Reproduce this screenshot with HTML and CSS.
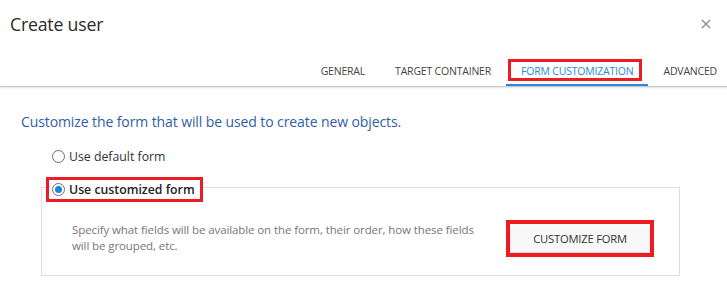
FILE: index.html
```html
<!DOCTYPE html>
<html lang="en">
<head>
    <meta charset="UTF-8">
    <meta name="viewport" content="width=device-width, initial-scale=1.0">
    <title>Create user</title>
    <link rel="stylesheet" href="styles.css">
</head>
<body>
    <div class="dialog">
        <div class="header">
            <h1>Create user</h1>
            <button class="close" type="button" aria-label="Close">
                <svg width="10" height="10" viewBox="0 0 10 10">
                    <path d="M1 1 L9 9 M9 1 L1 9" stroke="#8a8a8a" stroke-width="1.4" fill="none"/>
                </svg>
            </button>
        </div>
        <nav class="tabs">
            <a class="tab">GENERAL</a>
            <a class="tab">TARGET CONTAINER</a>
            <a class="tab active"><span class="mark">FORM CUSTOMIZATION</span></a>
            <a class="tab">ADVANCED</a>
        </nav>
        <div class="content">
            <p class="intro">Customize the form that will be used to create new objects.</p>
            <label class="option">
                <input type="radio" name="formType">
                <span>Use default form</span>
            </label>
            <fieldset class="panel">
                <legend>
                    <label class="option selected">
                        <input type="radio" name="formType" checked>
                        <span>Use customized form</span>
                    </label>
                </legend>
                <div class="panel-body">
                    <p class="desc">Specify what fields will be available on the form, their order, how these fields will be grouped, etc.</p>
                    <button class="btn" type="button">CUSTOMIZE FORM</button>
                </div>
            </fieldset>
        </div>
    </div>
</body>
</html>
```

FILE: styles.css
```css
body {
    margin: 0;
    background: #ffffff;
    font-family: 'Open Sans', 'Noto Sans', sans-serif;
    color: #333333;
    overflow: hidden;
}
.dialog {
    width: 727px;
    height: 294px;
}
.header {
    display: flex;
    justify-content: space-between;
    align-items: center;
    padding: 8px 16px 0 10px;
    height: 32px;
}
.header h1 {
    margin: 0;
    font-size: 17.7px;
    font-weight: 400;
    color: #2b2b2b;
    letter-spacing: -0.2px;
}
.close {
    border: none;
    background: none;
    padding: 0;
    width: 10px;
    height: 10px;
    display: flex;
    cursor: pointer;
}
.tabs {
    display: flex;
    justify-content: flex-end;
    margin-top: 18px;
    margin-right: -5px;
    height: 28px;
    border-bottom: 1px solid #c9c9c9;
    box-shadow: 0 1px 2px rgba(0, 0, 0, 0.12);
}
.tab {
    padding: 0 15px;
    font-size: 10.5px;
    line-height: 26px;
    color: #444444;
    letter-spacing: -0.2px;
    border-bottom: 2px solid transparent;
    cursor: pointer;
}
.tab.active {
    color: #2b88d8;
    border-bottom-color: #2b88d8;
}
.mark {
    outline: 3px solid #ed1c24;
    outline-offset: 0;
    padding: 2px 6px 0 10px;
    margin: 0 -6px 0 -10px;
}
.content {
    padding: 25px 47px 0 20px;
}
.intro {
    margin: 0 0 15px 1px;
    font-size: 14px;
    color: #2f5ea6;
    letter-spacing: -0.1px;
}
.option {
    display: inline-flex;
    align-items: center;
    gap: 4px;
    margin-left: 32px;
    font-size: 12.3px;
    color: #333333;
    cursor: pointer;
}
.option input {
    appearance: none;
    -webkit-appearance: none;
    width: 13px;
    height: 13px;
    margin: 0;
    border: 1px solid #6f6f6f;
    border-radius: 50%;
    background: #ffffff;
    display: grid;
    place-content: center;
}
.option input:checked::before {
    content: "";
    width: 7px;
    height: 7px;
    border-radius: 50%;
    background: #1a86d9;
}
.panel {
    margin: 8px 0 0 21px;
    padding: 0;
    border: 1px solid #dddddd;
    min-width: 0;
}
.panel legend {
    margin-left: 8px;
    padding: 0 2px 0 0;
}
.option.selected {
    margin-left: 0;
    font-weight: 600;
    color: #222222;
    outline: 3px solid #ed1c24;
    outline-offset: 1px;
    padding: 0 4px 0 2px;
}
.panel-body {
    display: flex;
    align-items: center;
    padding: 24px 0 21px 30px;
}
.desc {
    margin: 0;
    width: 410px;
    font-size: 11.5px;
    line-height: 16px;
    color: #777777;
    letter-spacing: -0.1px;
}
.btn {
    margin-left: 29px;
    width: 138px;
    height: 27px;
    border: none;
    background: #f8f8f8;
    font-family: inherit;
    font-size: 11.2px;
    color: #333333;
    letter-spacing: -0.2px;
    box-shadow: 0 2px 4px rgba(0, 0, 0, 0.2);
    outline: 4px solid #ed1c24;
    outline-offset: 1px;
    cursor: pointer;
}
```
